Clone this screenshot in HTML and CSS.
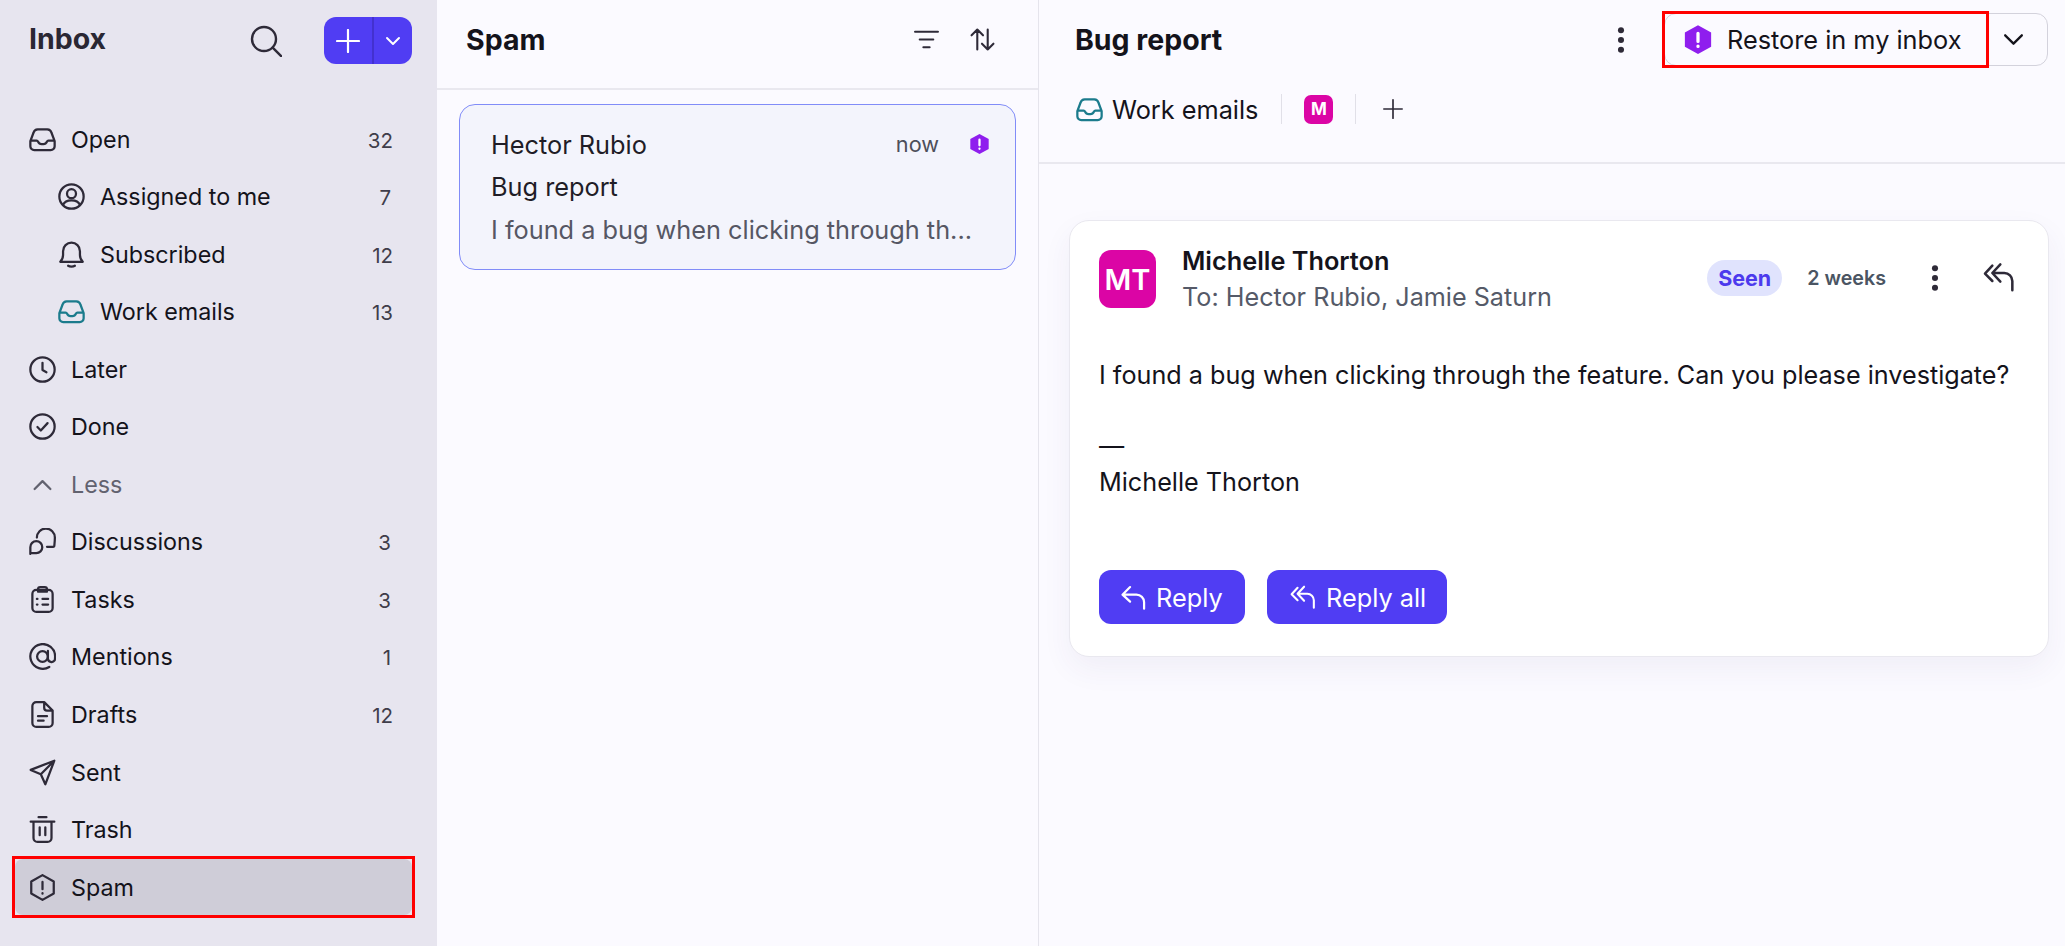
FILE: index.html
```html
<!DOCTYPE html>
<html lang="en">
<head>
    <meta charset="UTF-8">
    <meta name="viewport" content="width=device-width, initial-scale=1.0">
    <title>Spam</title>
    <link rel="stylesheet" href="styles.css">
</head>
<body>
    <svg class="icon-defs" aria-hidden="true">
        <symbol id="i-inbox" viewBox="0 0 24 24"><path d="M1.200 13.500V18a3.500 3.500 0 0 0 3.500 3.500h14.600a3.500 3.500 0 0 0 3.500-3.500v-4.500L20 6a4 4 0 0 0-3.700-3H7.700A4 4 0 0 0 4 6zM1.500 13h5.300c.7 0 1 .4 1.300 1 .6 1.300 1.700 2 3 2h1.800c1.300 0 2.400-.7 3-2 .3-.6.6-1 1.300-1h5.300"/></symbol>
        <symbol id="i-user" viewBox="0 0 24 24"><circle cx="12" cy="12" r="10.800"/><circle cx="12" cy="9.500" r="4"/><path d="M4.500 19.500c1-2.500 3.500-4 7.500-4s6.500 1.500 7.500 4"/></symbol>
        <symbol id="i-bell" viewBox="0 0 24 24"><path d="M2 18.500c1.500-1.500 2.500-3 2.500-6V9a7.500 7.500 0 0 1 15 0v3.500c0 3 1 4.500 2.500 6zM9 22c1.500 1 4.500 1 6 0"/></symbol>
        <symbol id="i-clock" viewBox="0 0 24 24"><circle cx="12" cy="12" r="10.800"/><path d="M12 6v6.500l3.500 2"/></symbol>
        <symbol id="i-check" viewBox="0 0 24 24"><circle cx="12" cy="12" r="10.800"/><path d="m7.500 12.500 3 3 6-6.500"/></symbol>
        <symbol id="i-chat" viewBox="0 0 24 24"><path d="M7 8.500a8 8 0 0 1 16 0c0 2-.2 4.500-.5 7.500-.1.500-.5.700-1 .7H16M1.200 23v-6a5.300 5.300 0 1 1 5.300 5.300H1.800z"/></symbol>
        <symbol id="i-tasks" viewBox="0 0 24 24"><rect x="3" y="3.500" width="18" height="19.500" rx="3.500"/><path d="M8 3.500V3a2 2 0 0 1 2-2h4a2 2 0 0 1 2 2v2H8zM12 11.500h5M12 16.500h5M7 11.500h.5M7 16.500h.5"/></symbol>
        <symbol id="i-at" viewBox="0 0 24 24"><circle cx="12" cy="12" r="4.800"/><path d="M16.800 7v7a3.300 3.300 0 0 0 6 1.500c.3-1 .4-2.300.4-3.500A11 11 0 1 0 18 21.300"/></symbol>
        <symbol id="i-doc" viewBox="0 0 24 24"><path d="M13.500 1H6.500A3.500 3.500 0 0 0 3 4.500v15A3.500 3.500 0 0 0 6.500 23h11a3.500 3.500 0 0 0 3.500-3.500V8.500zM13.500 1.500V6a2.500 2.500 0 0 0 2.500 2.500h4.500M8 13.500h8M8 17.500h5"/></symbol>
        <symbol id="i-send" viewBox="0 0 24 24"><path d="M1.500 9.700 22.500 1.500 14.500 22.500 10.500 13.500zM22 2l-11.500 11.500"/></symbol>
        <symbol id="i-trash" viewBox="0 0 24 24"><path d="M1.500 5h21M8.500 1h7M4 5v14.500A3.500 3.500 0 0 0 7.500 23h9a3.500 3.500 0 0 0 3.500-3.500V5M9.500 10v7M14.500 10v7"/></symbol>
        <symbol id="i-alert" viewBox="0 0 24 24"><path d="M12 1 22 6.700v10.600L12 23 2 17.300V6.700zM12 7v6.500M12 17v.5"/></symbol>
        <symbol id="i-solid-alert" viewBox="0 0 24 24"><path class="solid" d="M12 .5 22.500 6.300v11.400L12 23.500 1.500 17.700V6.300z"/><path class="mark-line" d="M12 7v6.500M12 17.200v.3"/></symbol>
        <symbol id="i-reply" viewBox="0 0 24 24"><path d="M9.500 3.500 3 10l6.500 6M3.500 10H15a6.500 6.500 0 0 1 6.500 6.500V22"/></symbol>
        <symbol id="i-reply-all" viewBox="0 0 24 24"><path d="M7 3.500 1.500 9.500 7 15M13 2.500 7 9l6 6.500M7.500 9H16a6 6 0 0 1 6 6v7"/></symbol>
        <symbol id="i-kebab" viewBox="0 0 24 24"><circle class="solid" cx="12" cy="3" r="2.800"/><circle class="solid" cx="12" cy="12" r="2.800"/><circle class="solid" cx="12" cy="21" r="2.800"/></symbol>
    </svg>

    <div class="app">
        <aside class="sidebar">
            <div class="sidebar-head">
                <h1>Inbox</h1>
                <svg class="search-icon" viewBox="0 0 24 24"><circle cx="10.500" cy="10.500" r="9"/><path d="m17 17 6.500 6.500"/></svg>
                <div class="compose">
                    <span class="compose-plus"><svg viewBox="0 0 24 24"><path d="M12 1v22M1 12h22"/></svg></span>
                    <span class="compose-more"><svg viewBox="0 0 24 24"><path d="m4 8 8 8 8-8"/></svg></span>
                </div>
            </div>

            <nav class="nav">
                <a class="nav-item"><svg class="nav-icon"><use href="#i-inbox"/></svg><span class="nav-label">Open</span><span class="nav-count">32</span></a>
                <a class="nav-item sub"><svg class="nav-icon"><use href="#i-user"/></svg><span class="nav-label">Assigned to me</span><span class="nav-count single">7</span></a>
                <a class="nav-item sub"><svg class="nav-icon"><use href="#i-bell"/></svg><span class="nav-label">Subscribed</span><span class="nav-count">12</span></a>
                <a class="nav-item sub"><svg class="nav-icon teal"><use href="#i-inbox"/></svg><span class="nav-label">Work emails</span><span class="nav-count">13</span></a>
                <a class="nav-item"><svg class="nav-icon"><use href="#i-clock"/></svg><span class="nav-label">Later</span></a>
                <a class="nav-item"><svg class="nav-icon"><use href="#i-check"/></svg><span class="nav-label">Done</span></a>
                <a class="nav-item less"><svg class="nav-icon" viewBox="0 0 24 24"><path d="m5 16 7-7 7 7"/></svg><span class="nav-label">Less</span></a>
                <a class="nav-item"><svg class="nav-icon"><use href="#i-chat"/></svg><span class="nav-label">Discussions</span><span class="nav-count single">3</span></a>
                <a class="nav-item"><svg class="nav-icon"><use href="#i-tasks"/></svg><span class="nav-label">Tasks</span><span class="nav-count single">3</span></a>
                <a class="nav-item"><svg class="nav-icon"><use href="#i-at"/></svg><span class="nav-label">Mentions</span><span class="nav-count single">1</span></a>
                <a class="nav-item"><svg class="nav-icon"><use href="#i-doc"/></svg><span class="nav-label">Drafts</span><span class="nav-count">12</span></a>
                <a class="nav-item"><svg class="nav-icon"><use href="#i-send"/></svg><span class="nav-label">Sent</span></a>
                <a class="nav-item"><svg class="nav-icon"><use href="#i-trash"/></svg><span class="nav-label">Trash</span></a>
                <a class="nav-item active callout"><svg class="nav-icon"><use href="#i-alert"/></svg><span class="nav-label">Spam</span></a>
            </nav>
        </aside>

        <section class="list-pane">
            <div class="list-head">
                <h2>Spam</h2>
                <div class="list-tools">
                    <svg class="tool-filter" viewBox="0 0 24 18"><path d="M1 1.500h22M5.500 9h13M9 16.500h6"/></svg>
                    <svg class="tool-sort" viewBox="0 0 24 22"><path d="M7 20.500V1.500M1.500 7 7 1.500 12.500 7M17 1.500v19M11.500 15l5.500 5.500 5.500-5.500"/></svg>
                </div>
            </div>

            <div class="thread-card">
                <div class="thread-top">
                    <span class="thread-sender">Hector Rubio</span>
                    <span class="thread-time">now</span>
                    <svg class="thread-badge"><use href="#i-solid-alert"/></svg>
                </div>
                <div class="thread-subject">Bug report</div>
                <div class="thread-preview">I found a bug when clicking through th...</div>
            </div>
        </section>

        <main class="detail-pane">
            <div class="detail-head">
                <div class="detail-top">
                    <h2>Bug report</h2>
                    <svg class="kebab"><use href="#i-kebab"/></svg>
                    <div class="restore">
                        <div class="restore-main callout">
                            <svg class="restore-icon"><use href="#i-solid-alert"/></svg>
                            <span>Restore in my inbox</span>
                        </div>
                        <div class="restore-more"><svg viewBox="0 0 24 24"><path d="m4 8 8 8 8-8"/></svg></div>
                    </div>
                </div>
                <div class="tags">
                    <div class="tag-inbox"><svg class="nav-icon teal"><use href="#i-inbox"/></svg><span>Work emails</span></div>
                    <span class="tag-sep"></span>
                    <span class="tag-avatar">M</span>
                    <span class="tag-sep"></span>
                    <svg class="tag-add" viewBox="0 0 24 24"><path d="M12 1v22M1 12h22"/></svg>
                </div>
            </div>

            <article class="mail">
                <div class="mail-head">
                    <div class="mail-avatar">MT</div>
                    <div class="mail-who">
                        <div class="mail-name">Michelle Thorton</div>
                        <div class="mail-to">To: Hector Rubio, Jamie Saturn</div>
                    </div>
                    <span class="seen">Seen</span>
                    <span class="mail-age">2 weeks</span>
                    <svg class="kebab"><use href="#i-kebab"/></svg>
                    <svg class="mail-reply"><use href="#i-reply-all"/></svg>
                </div>
                <div class="mail-body">
                    <p>I found a bug when clicking through the feature. Can you please investigate?</p>
                    <p class="mail-sign">—<br>Michelle Thorton</p>
                </div>
                <div class="mail-actions">
                    <button class="reply-btn reply-one"><svg><use href="#i-reply"/></svg>Reply</button>
                    <button class="reply-btn reply-all"><svg><use href="#i-reply-all"/></svg>Reply all</button>
                </div>
            </article>
        </main>
    </div>
</body>
</html>
```

FILE: styles.css
```css
* {
    margin: 0;
    padding: 0;
    box-sizing: border-box;
}

body {
    font-family: 'Inter', 'Liberation Sans', sans-serif;
    background: #fbfaff;
    color: #14131b;
    height: 100vh;
    overflow: hidden;
}

svg {
    fill: none;
    stroke: currentColor;
    stroke-width: 2;
    stroke-linecap: round;
    stroke-linejoin: round;
    flex-shrink: 0;
}

.solid {
    fill: currentColor;
    stroke: none;
}

.mark-line {
    stroke: #fff;
    stroke-width: 2.6;
}

.icon-defs {
    display: none;
}

.app {
    display: grid;
    grid-template-columns: 437px 602px 1fr;
    height: 100vh;
}

/* red annotation box from the screenshot */
.callout {
    position: relative;
}

.callout::after {
    content: '';
    position: absolute;
    inset: -3px;
    border: 3px solid #ff0000;
}

/* sidebar */
.sidebar {
    background: #e7e5ef;
    padding: 17px 25px 0 15px;
}

.sidebar-head {
    display: flex;
    align-items: center;
    height: 47px;
    padding-left: 14px;
    margin-bottom: 47px;
}

.sidebar-head h1 {
    font-size: 28.500px;
    font-weight: 700;
    color: #2a2733;
    margin-top: -4px;
    flex: 1;
}

.search-icon {
    width: 32px;
    height: 32px;
    color: #2e2a38;
    margin-right: 42px;
    stroke-width: 1.8;
}

.compose {
    display: flex;
    width: 88px;
    height: 47px;
    background: #503df3;
    border-radius: 12px;
    color: #fff;
    overflow: hidden;
}

.compose-plus,
.compose-more {
    display: flex;
    align-items: center;
    justify-content: center;
}

.compose-plus {
    width: 50px;
    border-right: 2px solid #4331cf;
}

.compose-plus svg {
    width: 24px;
    height: 24px;
    stroke-width: 2.2;
}

.compose-more {
    flex: 1;
}

.compose-more svg {
    width: 18px;
    height: 18px;
    stroke-width: 2.6;
}

.nav {
    display: flex;
    flex-direction: column;
    gap: 1.55px;
}

.nav-item {
    display: flex;
    align-items: center;
    height: 56px;
    padding: 0 19px 0 14px;
    border-radius: 8px;
    font-size: 23.300px;
}

.nav-item.sub {
    padding-left: 43px;
}

.nav-item.active {
    background: #cfcdd8;
}

.nav-item.less {
    color: #62626f;
}

.nav-icon {
    width: 27px;
    height: 27px;
    color: #2e2a38;
    margin-right: 15px;
}

.less .nav-icon {
    color: #62626f;
}

.nav-icon.teal {
    color: #1b7b8c;
}

.nav-label {
    flex: 1;
}

.nav-count {
    font-size: 20.500px;
    color: #3f3d4a;
    margin-top: 2px;
}

.nav-count.single {
    padding-right: 2px;
}

/* thread list */
.list-pane {
    border-right: 1px solid #e5e4ec;
}

.list-head {
    display: flex;
    align-items: center;
    justify-content: space-between;
    height: 90px;
    padding: 0 43px 10px 29px;
    border-bottom: 2px solid #e9e8ef;
}

.list-head h2,
.detail-top h2 {
    font-size: 28.500px;
    font-weight: 700;
    color: #14131b;
}

.list-tools {
    display: flex;
    align-items: center;
    gap: 31px;
    color: #2e2a38;
}

.tool-filter {
    width: 25px;
    height: 19px;
}

.tool-sort {
    width: 25px;
    height: 23px;
}

.thread-card {
    margin: 14px 22px 0;
    height: 166px;
    padding: 22px 25px 0 31px;
    background: #f3f4fc;
    border: 1px solid #818cf8;
    border-radius: 16px;
    font-size: 25.300px;
    color: #1f1d27;
}

.thread-top {
    display: flex;
    align-items: center;
    height: 34px;
}

.thread-sender {
    flex: 1;
}

.thread-time {
    font-size: 21.700px;
    color: #4d4e5a;
    margin-right: 30px;
}

.thread-badge {
    width: 21px;
    height: 22px;
    color: #8f1eee;
}

.thread-subject {
    margin-top: 9px;
    line-height: 34px;
}

.thread-preview {
    margin-top: 9px;
    line-height: 34px;
    color: #565764;
    white-space: nowrap;
}

/* message */
.detail-pane {
    display: flex;
    flex-direction: column;
    padding-bottom: 20px;
}

.detail-head {
    height: 164px;
    border-bottom: 2px solid #e9e8ef;
    padding: 13px 17px 0 36px;
}

.detail-top {
    display: flex;
    align-items: center;
    height: 53px;
}

.detail-top h2 {
    flex: 1;
}

.kebab {
    width: 26px;
    height: 26px;
    color: #2e2a38;
    stroke: none;
}

.detail-top .kebab {
    margin-right: 30px;
}

.restore {
    display: flex;
    width: 384px;
    height: 53px;
    border: 1px solid #d3d2dc;
    border-radius: 12px;
    font-size: 25.300px;
}

.restore-main {
    display: flex;
    align-items: center;
    width: 321px;
    padding-left: 18px;
    gap: 14px;
}

.restore-icon {
    width: 30px;
    height: 33px;
    color: #8f1eee;
}

.restore-more {
    flex: 1;
    display: flex;
    align-items: center;
    justify-content: center;
    padding-right: 6px;
}

.restore-more svg {
    width: 25px;
    height: 25px;
    stroke-width: 2.200;
}

.tags {
    display: flex;
    align-items: center;
    height: 30px;
    margin-top: 28px;
    font-size: 25.300px;
}

.tag-inbox {
    display: flex;
    align-items: center;
    margin: 0 23px 0 1px;
}

.tag-inbox .nav-icon {
    margin-right: 9px;
}

.tag-sep {
    width: 1px;
    height: 30px;
    background: #e1e0e8;
}

.tag-avatar {
    display: flex;
    align-items: center;
    justify-content: center;
    width: 29px;
    height: 29px;
    margin: 0 22px;
    background: #db05a5;
    border-radius: 7px;
    color: #fff;
    font-size: 17px;
    font-weight: 700;
}

.tag-add {
    width: 20px;
    height: 20px;
    margin-left: 27px;
    color: #2e2a38;
}

.mail {
    margin: 56px 16px 0 30px;
    height: 437px;
    padding: 29px 29px 0;
    background: #fff;
    border: 1px solid #e9e8ef;
    border-radius: 20px;
    box-shadow: 0 12px 30px rgba(60, 50, 120, 0.06);
}

.mail-head {
    display: flex;
    align-items: flex-start;
}

.mail-avatar {
    display: flex;
    align-items: center;
    justify-content: center;
    width: 57px;
    height: 58px;
    background: #db05a5;
    border-radius: 12px;
    color: #fff;
    font-size: 29px;
    font-weight: 600;
}

.mail-who {
    flex: 1;
    margin-left: 26px;
}

.mail-name {
    font-size: 25.300px;
    font-weight: 600;
    line-height: 30px;
    margin-top: -4px;
}

.mail-to {
    font-size: 25.200px;
    line-height: 30px;
    margin-top: 6px;
    color: #555a68;
}

.seen {
    margin-top: 10px;
    padding: 0 11px;
    height: 36px;
    line-height: 36px;
    background: #e0e3fd;
    border-radius: 18px;
    color: #4c3aed;
    font-size: 21.500px;
    font-weight: 700;
}

.mail-age {
    margin: 11px 36px 0 25px;
    line-height: 34px;
    font-size: 19.700px;
    font-weight: 600;
    color: #4b5563;
}

.mail-head .kebab {
    margin-top: 15px;
}

.mail-reply {
    width: 32px;
    height: 32px;
    margin: 11px 4px 0 35px;
    color: #2e2a38;
    stroke-width: 1.9;
}

.mail-body {
    margin-top: 46px;
    font-size: 25.200px;
    line-height: 35.500px;
}

.mail-sign {
    margin-top: 35.500px;
}

.mail-actions {
    display: flex;
    gap: 22px;
    margin-top: 70px;
}

.reply-btn {
    display: flex;
    align-items: center;
    height: 54px;
    background: #503df3;
    border: none;
    border-radius: 12px;
    color: #fff;
    font-family: inherit;
    font-size: 25.300px;
}

.reply-btn svg {
    stroke-width: 1.9;
}

.reply-one {
    width: 146px;
    padding-left: 20px;
    gap: 9px;
}

.reply-one svg {
    width: 28px;
    height: 28px;
}

.reply-all {
    width: 180px;
    padding-left: 23px;
    gap: 10px;
}

.reply-all svg {
    width: 26px;
    height: 26px;
}
```
